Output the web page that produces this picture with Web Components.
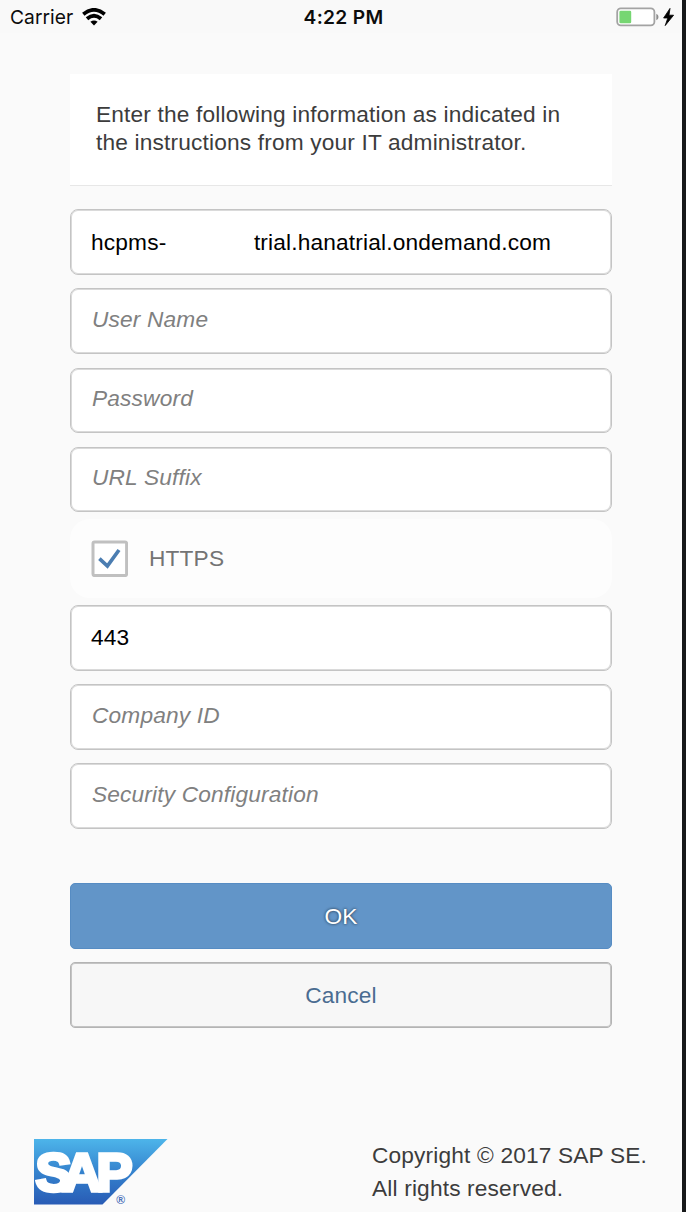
<!DOCTYPE html>
<html lang="en">
<head>
<meta charset="utf-8">
<title>Registration</title>
<style>
html,body{margin:0;background:#fafafa}
body{font-family:"Liberation Sans",Arial,sans-serif;font-size:22.7px;letter-spacing:.165px}
</style>
</head>
<body>
<app-screen>
  <status-bar slot="status"></status-bar>
  <info-panel>Enter the following information as indicated in<br>the instructions from your IT administrator.</info-panel>
  <form-list>
    <text-field filled><span>hcpms-</span><span>trial.hanatrial.ondemand.com</span></text-field>
    <text-field>User Name</text-field>
    <text-field>Password</text-field>
    <text-field>URL Suffix</text-field>
    <check-row>HTTPS</check-row>
    <text-field filled>443</text-field>
    <text-field>Company ID</text-field>
    <text-field>Security Configuration</text-field>
  </form-list>
  <button-stack>
    <push-button primary>OK</push-button>
    <push-button>Cancel</push-button>
  </button-stack>
  <page-footer slot="footer"><sap-logo slot="logo"></sap-logo>Copyright © 2017 SAP SE.<br>All rights reserved.</page-footer>
</app-screen>
<script>
const define = (name, html) => customElements.define(name, class extends HTMLElement {
  constructor() {
    super();
    this.attachShadow({ mode: 'open' }).innerHTML = html;
  }
});

define('app-screen', `<style>
:host{display:flex;flex-direction:column;box-sizing:border-box;width:686px;height:1212px;overflow:hidden;border-right:4px solid #17191a;background:#fafafa}
main{display:flex;flex-direction:column;margin:41px 70px 0;flex:1}
</style><slot name="status"></slot><main><slot></slot></main><slot name="footer"></slot>`);

define('status-bar', `<style>
:host{display:grid;grid-template-columns:1fr auto 1fr;align-items:center;height:33px;padding:0 7px 0 10px;background:#f9f9f9;color:#0c0c0c;font-family:Inter,sans-serif;font-size:19.2px;box-sizing:border-box}
.l{display:flex;align-items:center;gap:9px}
.l span{letter-spacing:.05px;position:relative;top:.5px}
.t{font-weight:600;letter-spacing:.3px;position:relative;top:.5px;left:1px}
.r{display:flex;justify-content:flex-end}
svg{display:block}
</style>
<div class="l"><span>Carrier</span><svg width="24" height="18" viewBox="0 0 24 18"><g fill="none" stroke="#000" stroke-width="3.8"><path d="M1.3 6.3Q12 -2.6 22.7 6.3"/><path d="M5 10.8Q12 4.8 19 10.8"/></g><path d="M8.4 13.8Q12 11 15.6 13.8L12 17.4Z"/></svg></div>
<div class="t">4:22 PM</div>
<div class="r"><svg width="60" height="20" viewBox="0 0 60 20"><rect x="2.2" y="1.4" width="37.2" height="17" rx="3.6" fill="#fff" stroke="#a3a3a3" stroke-width="1.8"/><rect x="4.4" y="3.8" width="11.8" height="12.4" rx="1.3" fill="#76d672"/><path d="M41.3 6.7q2.2 1 2.2 3.3t-2.2 3.3z" fill="#8d8d8d"/><path d="M55 1.4L48.6 11h4.2l-2.6 7.6 8.4-10.4h-4.6z" stroke="#000" stroke-width=".8"/></svg></div>`);

define('info-panel', `<style>
:host{display:block;box-sizing:border-box;height:112px;padding:26px 26px 0;background:#fff;border-bottom:1.5px solid #e7e7e7;color:#3c3c3c;line-height:28px}
</style><slot></slot>`);

define('form-list', `<style>
:host{display:flex;flex-direction:column;margin-top:16.5px}
</style><slot></slot>`);

define('text-field', `<style>
:host{display:flex;box-sizing:border-box;flex:none;height:79.15px;padding:6.8px 0}
div{flex:1;display:flex;align-items:center;gap:87.5px;box-sizing:border-box;border:1px solid #c4c4c4;box-shadow:inset 0 0 0 1px #dadada;border-radius:8px;background:#fff;padding:0 20px 3.5px 21px;font-style:italic;color:#808080}
:host([filled]) div{font-style:normal;color:#000;padding:0 20px 0 20px}
</style><div><slot></slot></div>`);

define('check-row', `<style>
:host{display:flex;align-items:center;flex:none;height:79.15px;box-sizing:border-box;padding-left:21px;gap:21px;background:#fdfdfd;border-radius:20px;color:#747474}
svg{display:block}
</style><svg width="37" height="37" viewBox="0 0 37 37"><rect x="2" y="2" width="33.6" height="33.6" rx="1.5" fill="#fff" stroke="#c0c0c0" stroke-width="3"/><path d="M8.4 18.6L16.4 26L28 10" fill="none" stroke="#4b7db1" stroke-width="3.7"/></svg><span><slot></slot></span>`);

define('button-stack', `<style>
:host{display:flex;flex-direction:column;gap:13px;margin-top:47.3px}
</style><slot></slot>`);

define('push-button', `<style>
:host{display:flex;align-items:center;justify-content:center;box-sizing:border-box;height:66px;padding-top:2px;border:1px solid #b4b4b4;box-shadow:inset 0 0 0 1px #c4c4c4;border-radius:5px;background:#f7f7f7;color:#4a6c91}
:host([primary]){background:#6295c8;border-color:#568cc3;box-shadow:none;color:#fff;text-shadow:0 0 3px rgba(0,0,0,.75)}
</style><slot></slot>`);

define('page-footer', `<style>
:host{display:flex;justify-content:space-between;align-items:flex-start;height:74px;padding-left:34px;color:#3c3c3c}
p{margin:1px 0 0;width:310px;line-height:33px;white-space:nowrap}
</style><slot name="logo"></slot><p><slot></slot></p>`);

define('sap-logo', `<style>:host{display:block;letter-spacing:0}svg{display:block}</style>
<svg width="134" height="68" viewBox="0 0 134 68"><defs><linearGradient id="g" x2="0" y2="1"><stop stop-color="#4db5ea"/><stop offset=".5" stop-color="#3583ce"/><stop offset="1" stop-color="#285bb5"/></linearGradient></defs>
<path d="M0 1H133.5L68.5 66.5H0Z" fill="url(#g)"/>
<text x="1.5 28.5 62.5" y="52.5" fill="#fff" stroke="#fff" stroke-width="3.6" font-family="Liberation Sans" font-weight="700" font-size="54">SAP</text>
<text x="82.3" y="66.3" font-family="Liberation Sans" font-weight="700" font-size="12" fill="#4a70b9">®</text></svg>`);
</script>
</body>
</html>
